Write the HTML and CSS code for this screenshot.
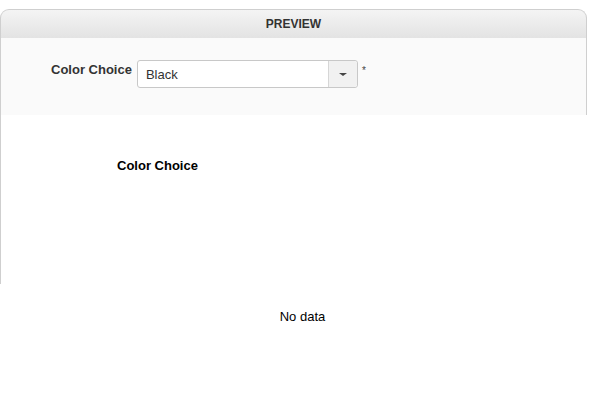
FILE: index.html
```html
<!DOCTYPE html>
<html lang="en">
	<head>
		<meta charset="UTF-8" />
		<title>Preview</title>
		<link rel="stylesheet" href="styles.css">
	</head>
	<body>
		<div class="panel">
			<div class="panel-head">PREVIEW</div>
			<div class="form-area">
				<label class="field-label">Color Choice</label>
				<div class="select">
					<span class="select-value">Black</span>
					<span class="select-btn"><i class="caret"></i></span>
				</div>
				<span class="req">*</span>
			</div>
			<div class="output-area">
				<div class="out-label">Color Choice</div>
			</div>
		</div>
		<div class="empty">No data</div>
	</body>
</html>
```

FILE: styles.css
```css
* {
	margin: 0;
	padding: 0;
	box-sizing: border-box;
}
body {
	font-family: "Liberation Sans", Arial, sans-serif;
	font-size: 13px;
	color: #000;
	background: #fff;
}
.panel {
	width: 587px;
	margin-top: 9px;
	padding-left: 1px;
}
.panel-head {
	height: 29px;
	border: 1px solid #cfcfcf;
	border-bottom: 0;
	border-radius: 9px 9px 0 0;
	background: linear-gradient(#f4f4f4, #e3e3e3);
	text-align: center;
	font-size: 12px;
	font-weight: bold;
	color: #333;
	line-height: 29px;
	margin-left: -1px;
}
.form-area {
	height: 77px;
	background: #fafafa;
	border-left: 1px solid #cfcfcf;
	border-right: 1px solid #cfcfcf;
	margin-left: -1px;
	display: flex;
	align-items: flex-start;
	padding: 22px 0 0 50px;
}
.field-label {
	font-weight: bold;
	color: #333;
	margin-top: 2px;
	margin-right: 5px;
}
.select {
	width: 221px;
	height: 28px;
	display: flex;
	border: 1px solid #c8c8c8;
	border-radius: 3px;
	background: #fff;
}
.select-value {
	flex: 1;
	padding: 6px 8px;
	color: #333;
}
.select-btn {
	width: 29px;
	border-left: 1px solid #d6d6d6;
	background: #f1f1f1;
	border-radius: 0 3px 3px 0;
	display: flex;
	align-items: center;
	justify-content: center;
}
.caret {
	border-top: 3px solid #444;
	border-left: 4px solid transparent;
	border-right: 4px solid transparent;
}
.req {
	font-size: 10px;
	color: #444;
	margin: 5px 0 0 4px;
}
.output-area {
	height: 169px;
	border-left: 1px solid #cfcfcf;
	margin-left: -1px;
	padding: 43px 0 0 116px;
}
.out-label {
	font-weight: bold;
}
.empty {
	padding: 25px 0 0 8px;
	text-align: center;
}
```
